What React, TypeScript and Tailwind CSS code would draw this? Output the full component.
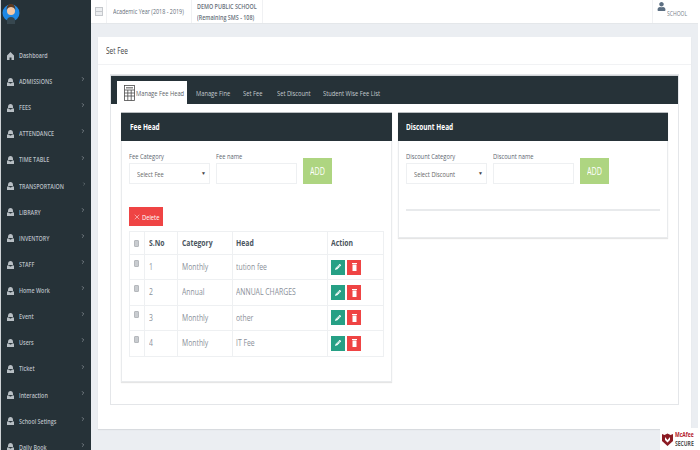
import type { ReactNode } from 'react'
import { ChevronRight, X } from 'lucide-react'
import { FaPencilAlt, FaUser } from 'react-icons/fa'

const menu = [
  { label: 'Dashboard', home: true },
  { label: 'ADMISSIONS' },
  { label: 'FEES' },
  { label: 'ATTENDANCE' },
  { label: 'TIME TABLE' },
  { label: 'TRANSPORTAION' },
  { label: 'LIBRARY' },
  { label: 'INVENTORY' },
  { label: 'STAFF' },
  { label: 'Home Work' },
  { label: 'Event' },
  { label: 'Users' },
  { label: 'Ticket' },
  { label: 'Interaction' },
  { label: 'School Setings' },
  { label: 'Daily Book' },
]

const tabs = [
  { label: 'Manage Fine', width: 'w-[47px]' },
  { label: 'Set Fee', width: 'w-[34px]' },
  { label: 'Set Discount', width: 'w-[46px]' },
  { label: 'Student Wise Fee List', width: 'w-[60px]' },
]

const rows = [
  { no: 1, category: 'Monthly', head: 'tution fee' },
  { no: 2, category: 'Annual', head: 'ANNUAL CHARGES' },
  { no: 3, category: 'Monthly', head: 'other' },
  { no: 4, category: 'Monthly', head: 'IT Fee' },
]

// the screenshot is squeezed sideways, so text gets the same squeeze
function T({ children }: { children: ReactNode }) {
  return <span className="inline-block origin-left scale-x-[.72] whitespace-nowrap">{children}</span>
}

function Avatar() {
  return (
    <svg width="18" height="25" viewBox="0 0 18 25" className="ml-[1px]">
      <circle cx="9" cy="13" r="8.5" fill="#1e88e5" />
      <path d="M5 21c0-3 1.500-4 4-4s4 1 4 4v3H5z" fill="#37474f" />
      <circle cx="9" cy="11" r="4" fill="#f5c9a5" />
      <path d="M4.500 10c0-4 2-6 4.500-6s4.500 2 4.500 6c-1-2-2-3-4.500-3s-3.500 1-4.500 3z" fill="#5d3a1f" />
    </svg>
  )
}

function HomeIcon() {
  return (
    <svg width="7" height="8" viewBox="0 0 7 8" className="shrink-0" fill="#b8bfc4">
      <path d="M3.500 0L7 3.500V8H4.500V5.500h-2V8H0V3.500z" />
    </svg>
  )
}

function BoxIcon() {
  return (
    <svg width="7" height="8" viewBox="0 0 7 8" className="shrink-0" fill="#b8bfc4">
      <path d="M1 3C1 1 2 0 3.500 0S6 1 6 3v1H1z" />
      <path d="M0 4.500h2l1 1h1l1-1h2V8H0z" />
    </svg>
  )
}

function Calculator() {
  return (
    <svg width="11" height="16" viewBox="0 0 11 16" className="shrink-0" fill="none" stroke="#4b4b4b" strokeWidth="0.8">
      <rect x="0.500" y="0.500" width="10" height="15" />
      <path d="M0.500 5h10M0.500 8h10M0.500 11h10M3.800 5v10.500M7.200 5v10.500" />
      <rect x="2" y="2" width="7" height="1.500" fill="#8a8a8a" stroke="none" />
    </svg>
  )
}

function Field({ label, children }: { label: string; children: ReactNode }) {
  return (
    <div className="w-[81px]">
      <div className="text-[8px] leading-[10px] text-[#5d6670] h-[10px] mb-[2px]"><T>{label}</T></div>
      {children}
    </div>
  )
}

function AddForm({ catLabel, nameLabel, placeholder }: { catLabel: string; nameLabel: string; placeholder: string }) {
  return (
    <div className="flex items-start gap-[6px]">
      <Field label={catLabel}>
        <div className="h-[21px] border border-[#eef0f2] bg-white flex items-center justify-between pl-[7px] pr-[3px] text-[8px] text-[#666]">
          <T>{placeholder}</T>
          <span className="text-[5px] text-[#444]">▼</span>
        </div>
      </Field>
      <Field label={nameLabel}>
        <div className="h-[21px] border border-[#eef0f2] bg-white" />
      </Field>
      <button className="w-[29px] h-[26px] mt-[7px] bg-[#aed581] text-white text-[10px] flex items-center pl-[7px]"><T>ADD</T></button>
    </div>
  )
}

function Checkbox() {
  return <div className="w-[5px] h-[7px] rounded-[1px] bg-[#c9ccd0] border border-[#b5b8bc]" />
}

function TrashIcon() {
  return (
    <svg width="5" height="8" viewBox="0 0 5 8" fill="#fff">
      <path d="M0 0h5v1H0zM0.500 1.500h4V8h-4z" />
    </svg>
  )
}

export default function App() {
  return (
    <div className="w-[700px] h-[450px] overflow-hidden flex bg-white font-['Open_Sans',sans-serif]">
      <aside className="w-[91px] h-full shrink-0 bg-[#263238] border-l border-[#cfd3d6]">
        <div className="h-[42.500px]">
          <Avatar />
        </div>
        {menu.map((m) => (
          <div key={m.label} className="h-[26.13px] flex items-center pl-[6px] text-[#b8bfc4]">
            {m.home ? <HomeIcon /> : <BoxIcon />}
            <span className="ml-[5px] text-[7.500px] font-semibold"><T>{m.label}</T></span>
            {!m.home && <ChevronRight size={6} className="ml-auto mr-[5px] -mt-[5px]" />}
          </div>
        ))}
      </aside>

      <div className="w-[607px] shrink-0 h-full flex flex-col bg-[#ebeef2]">
        <header className="h-[24px] shrink-0 bg-white border-b border-[#e4e7ea] flex items-stretch text-[#66707a] text-[7.500px]">
          <div className="w-[16px] border-r border-[#f0f1f3] flex items-center justify-center">
            <div className="w-[8px] h-[9px] border border-[#c5c8cc] bg-[#eceef0] flex items-center">
              <div className="w-full h-px bg-[#c5c8cc]" />
            </div>
          </div>
          <div className="w-[85px] border-r border-[#f0f1f3] pl-[6px] flex items-center"><T>Academic Year (2018 - 2019)</T></div>
          <div className="w-[71px] border-r border-[#f0f1f3] pl-[5px] leading-[11px] pt-[1px] font-semibold">
            <div><T>DEMO PUBLIC SCHOOL</T></div>
            <div><T>(Remaining SMS - 108)</T></div>
          </div>
          <div className="ml-auto w-[46px] border-l border-[#f0f1f3] pl-[4px] flex items-start">
            <FaUser size={9} className="text-[#5c6f82] mt-[2px] shrink-0" />
            <span className="text-[7px] mt-[9px] ml-[1px] text-[#77808a]"><T>SCHOOL</T></span>
          </div>
        </header>

        <main className="flex-1 min-h-0 pl-[7px] pr-[7px] pt-[13px]">
          <div className="bg-white h-[392px] shadow-[0_1px_1px_rgba(0,0,0,0.08)]">
            <div className="h-[28px] border-b border-[#f1f2f4] pl-[8px] flex items-center text-[9px] text-[#444]"><T>Set Fee</T></div>
            <div className="pt-[9px] pl-[12px]">
              <div className="w-[569px] h-[331px] border border-[#e4e6e9]">
                <div className="h-[29px] bg-[#263238] flex items-end pl-[6px] text-[#c5cbcf] text-[8px] border-t border-[#d0d3d6]">
                  <div className="w-[70px] h-[23px] bg-white flex items-center pl-[7px] gap-[1px] text-[#5b6269]">
                    <Calculator />
                    <T>Manage Fee Head</T>
                  </div>
                  <div className="flex h-[23px] items-center pl-[9px]">
                    {tabs.map((t) => (
                      <div key={t.label} className={t.width}><T>{t.label}</T></div>
                    ))}
                  </div>
                </div>

                <div className="flex items-start gap-[6px] pl-[10px] pt-[8px]">
                  <section className="w-[271px] h-[270px] border border-t-0 border-[#e9ebed] shadow-[0_1px_1px_rgba(0,0,0,0.1)]">
                    <div className="h-[29px] -mx-[1px] bg-[#263238] text-white text-[9px] font-bold flex items-center pl-[9px] border-t border-[#b9bdc0]"><T>Fee Head</T></div>
                    <div className="pl-[7px] pt-[10px]">
                      <AddForm catLabel="Fee Category" nameLabel="Fee name" placeholder="Select Fee" />
                      <button className="mt-[23px] w-[34px] h-[19px] bg-[#ef4444] text-white text-[8px] flex items-center pl-[4px] gap-[1px]">
                        <X size={8} strokeWidth={1.500} className="shrink-0" />
                        <T>Delete</T>
                      </button>
                      <table className="mt-[5px] w-[254px] table-fixed border-collapse text-[9.500px] text-[#8a9099]">
                        <colgroup>
                          <col className="w-[15px]" />
                          <col className="w-[33px]" />
                          <col className="w-[55px]" />
                          <col className="w-[95px]" />
                          <col className="w-[56px]" />
                        </colgroup>
                        <thead>
                          <tr className="h-[23px] text-[#4a5560] text-left">
                            <th className="border border-[#eef0f2] pl-[4px]"><Checkbox /></th>
                            <th className="border border-[#eef0f2] pl-[4px] font-bold"><T>S.No</T></th>
                            <th className="border border-[#eef0f2] pl-[4px] font-bold"><T>Category</T></th>
                            <th className="border border-[#eef0f2] pl-[3px] font-bold"><T>Head</T></th>
                            <th className="border border-[#eef0f2] pl-[3px] font-bold"><T>Action</T></th>
                          </tr>
                        </thead>
                        <tbody>
                          {rows.map((r) => (
                            <tr key={r.no} className="h-[25.400px]">
                              <td className="border border-[#eef0f2] pl-[4px] align-top pt-[5px]"><Checkbox /></td>
                              <td className="border border-[#eef0f2] pl-[4px]"><T>{r.no}</T></td>
                              <td className="border border-[#eef0f2] pl-[4px]"><T>{r.category}</T></td>
                              <td className="border border-[#eef0f2] pl-[3px]"><T>{r.head}</T></td>
                              <td className="border border-[#eef0f2] pl-[3px]">
                                <div className="flex gap-[2px]">
                                  <span className="w-[14px] h-[15px] bg-[#26a085] text-white flex items-center justify-center"><FaPencilAlt size={6} /></span>
                                  <span className="w-[14px] h-[15px] bg-[#ef4444] flex items-center justify-center"><TrashIcon /></span>
                                </div>
                              </td>
                            </tr>
                          ))}
                        </tbody>
                      </table>
                    </div>
                  </section>

                  <section className="w-[270px] h-[126px] border border-t-0 border-[#e9ebed] shadow-[0_1px_1px_rgba(0,0,0,0.1)]">
                    <div className="h-[29px] -mx-[1px] bg-[#263238] text-white text-[9px] font-bold flex items-center pl-[8px] border-t border-[#b9bdc0]"><T>Discount Head</T></div>
                    <div className="pl-[7px] pt-[10px] pr-[7px]">
                      <AddForm catLabel="Discount Category" nameLabel="Discount name" placeholder="Select Discount" />
                      <div className="mt-[25px] h-[2px] bg-[#e8eaec]" />
                    </div>
                  </section>
                </div>
              </div>
            </div>
          </div>
        </main>
      </div>

      <div className="flex-1 relative">
        <div className="absolute right-0 bottom-0 w-[40px] h-[22px] bg-white flex items-center gap-[2px] pl-[2px]">
          <svg width="11" height="13" viewBox="0 0 11 13" className="shrink-0">
            <path d="M0 1l2.500 1 3-1.500 3 1.500L11 1v7l-5.500 5L0 8z" fill="#8c1c24" />
            <path d="M3 4l2.500 3L8 4v3l-2.500 2.500L3 7z" fill="#fff" />
          </svg>
          <div className="text-[7px] leading-[9px] font-bold">
            <div className="text-[#b3202a]"><T>McAfee</T></div>
            <div className="text-[#555]"><T>SECURE</T></div>
          </div>
        </div>
      </div>
    </div>
  )
}
